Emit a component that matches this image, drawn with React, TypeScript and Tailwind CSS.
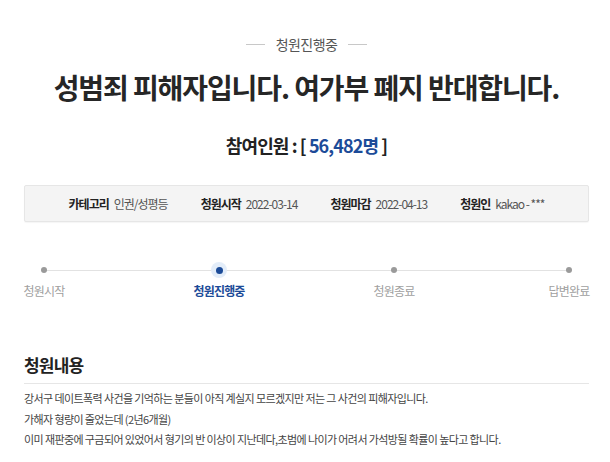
const font = "font-['Noto_Sans_CJK_KR','Noto_Sans',sans-serif]";

const meta = [
  { label: '카테고리', value: '인권/성평등' },
  { label: '청원시작', value: '2022-03-14' },
  { label: '청원마감', value: '2022-04-13' },
  { label: '청원인', value: 'kakao - ***' },
];

const steps = ['청원시작', '청원진행중', '청원종료', '답변완료'];

export default function App() {
  return (
    <div className={`${font} w-[610px] h-[462px] overflow-hidden bg-white pl-[24px] pr-[21px] pt-[34px]`}>
      {/* status */}
      <div className="flex items-center justify-center gap-[11px] text-[14px] leading-[20px] text-[#555] tracking-[-0.6px]">
        <span className="w-[19px] h-px bg-[#c8c8c8]" />
        <span>청원진행중</span>
        <span className="w-[19px] h-px bg-[#c8c8c8]" />
      </div>

      {/* title */}
      <h1 className="mt-[14px] text-center text-[28px] leading-[38px] font-bold text-[#262626] tracking-[-1.1px]">
        성범죄 피해자입니다. 여가부 폐지 반대합니다.
      </h1>

      {/* count */}
      <p className="mt-[27px] text-center text-[18px] leading-[24px] font-bold text-[#222] tracking-[-0.9px]">
        참여인원 : [ <span className="text-[#1c4b98]">56,482명</span> ]
      </p>

      {/* info box */}
      <div className="mt-[28px] h-[37px] flex items-center justify-center gap-[33px] bg-[#f4f4f4] border border-[#e6e6e6] rounded-[2px] shadow-[0_1px_1px_rgba(0,0,0,0.04)] text-[12px] tracking-[-1px]">
        {meta.map((m) => (
          <div key={m.label} className="flex items-center gap-[5px]">
            <span className="font-bold text-[#222]">{m.label}</span>
            <span className="text-[#555]">{m.value}</span>
          </div>
        ))}
      </div>

      {/* progress */}
      <div className="mt-[40px] relative">
        <div className="absolute left-[19px] right-[19px] top-[8px] h-px bg-[#e2e2e2]" />
        <div className="relative flex justify-between">
          {steps.map((s, i) => (
            <div key={s} className="w-[40px] flex flex-col items-center">
              <div className="h-[16px] flex items-center justify-center">
                {i === 1 ? (
                  <span className="w-[16px] h-[16px] rounded-full bg-[#e3edf9] flex items-center justify-center">
                    <span className="w-[7px] h-[7px] rounded-full bg-[#1c4b98]" />
                  </span>
                ) : (
                  <span className="w-[6px] h-[6px] rounded-full bg-[#9a9a9a]" />
                )}
              </div>
              <span
                className={`mt-[5px] whitespace-nowrap text-[12px] leading-[16px] tracking-[-0.8px] ${
                  i === 1 ? 'font-bold text-[#1c4b98]' : 'text-[#a0a0a0]'
                }`}
              >
                {s}
              </span>
            </div>
          ))}
        </div>
      </div>

      {/* content */}
      <h2 className="mt-[55px] text-[17px] leading-[22px] font-bold text-[#222] tracking-[-0.8px]">청원내용</h2>
      <div className="mt-[7px] h-px bg-[#e6e6e6]" />
      <div className="mt-[4px] text-[11px] leading-[20.5px] text-[#444] tracking-[-0.6px]">
        <p>강서구 데이트폭력 사건을 기억하는 분들이 아직 계실지 모르겠지만 저는 그 사건의 피해자입니다.</p>
        <p>가해자 형량이 줄었는데 (2년6개월)</p>
        <p>이미 재판중에 구금되어 있었어서 형기의 반 이상이 지난데다,초범에 나이가 어려서 가석방될 확률이 높다고 합니다.</p>
      </div>
    </div>
  );
}
